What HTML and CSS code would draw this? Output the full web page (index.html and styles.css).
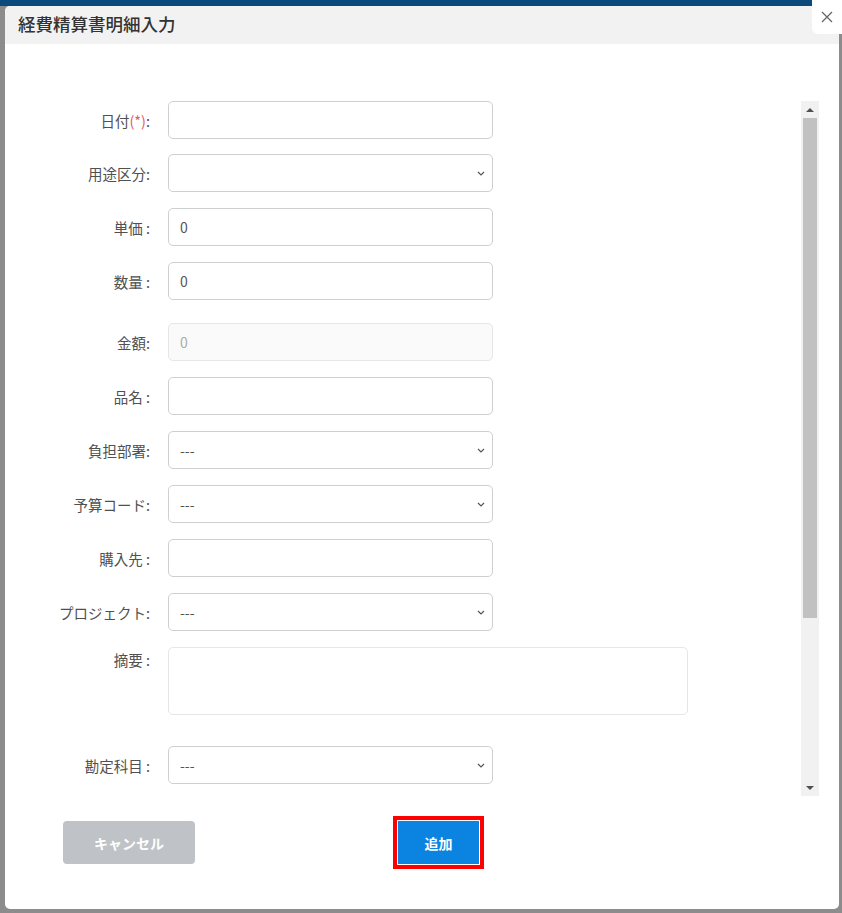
FILE: index.html
```html
<!DOCTYPE html>
<html lang="ja">
  <head>
    <meta charset="UTF-8">
    <meta name="viewport" content="width=device-width, initial-scale=1.0">
    <title>経費精算書明細入力</title>
    <link rel="stylesheet" href="styles.css">
  </head>
  <body>
    <div class="topbar"></div>

    <div class="modal">
      <div class="modal-header">
        <h2 class="modal-title">経費精算書明細入力</h2>
      </div>

      <div class="modal-body">
        <div class="scroll-area">
          <form class="detail-form">
            <div class="form-row row-first">
              <label class="form-label">日付<span class="required">(*)</span>:</label>
              <input type="text" class="form-control">
            </div>
            <div class="form-row">
              <label class="form-label">用途区分:</label>
              <div class="select-wrap">
                <select class="form-control"><option></option></select>
                <svg class="chevron" width="8" height="5" viewBox="0 0 8 5"><path d="M1 1 L4 4 L7 1" stroke="#555" stroke-width="1.2" fill="none"/></svg>
              </div>
            </div>
            <div class="form-row">
              <label class="form-label">単価 :</label>
              <input type="text" class="form-control" value="0">
            </div>
            <div class="form-row">
              <label class="form-label">数量 :</label>
              <input type="text" class="form-control" value="0">
            </div>
            <div class="form-row row-spaced">
              <label class="form-label">金額:</label>
              <input type="text" class="form-control" value="0" disabled>
            </div>
            <div class="form-row">
              <label class="form-label">品名 :</label>
              <input type="text" class="form-control">
            </div>
            <div class="form-row">
              <label class="form-label">負担部署:</label>
              <div class="select-wrap">
                <select class="form-control"><option>---</option></select>
                <svg class="chevron" width="8" height="5" viewBox="0 0 8 5"><path d="M1 1 L4 4 L7 1" stroke="#555" stroke-width="1.2" fill="none"/></svg>
              </div>
            </div>
            <div class="form-row">
              <label class="form-label">予算コード:</label>
              <div class="select-wrap">
                <select class="form-control"><option>---</option></select>
                <svg class="chevron" width="8" height="5" viewBox="0 0 8 5"><path d="M1 1 L4 4 L7 1" stroke="#555" stroke-width="1.2" fill="none"/></svg>
              </div>
            </div>
            <div class="form-row">
              <label class="form-label">購入先 :</label>
              <input type="text" class="form-control">
            </div>
            <div class="form-row">
              <label class="form-label">プロジェクト:</label>
              <div class="select-wrap">
                <select class="form-control"><option>---</option></select>
                <svg class="chevron" width="8" height="5" viewBox="0 0 8 5"><path d="M1 1 L4 4 L7 1" stroke="#555" stroke-width="1.2" fill="none"/></svg>
              </div>
            </div>
            <div class="form-row row-top">
              <label class="form-label">摘要 :</label>
              <textarea class="form-control memo"></textarea>
            </div>
            <div class="form-row row-after-memo">
              <label class="form-label">勘定科目 :</label>
              <div class="select-wrap">
                <select class="form-control"><option>---</option></select>
                <svg class="chevron" width="8" height="5" viewBox="0 0 8 5"><path d="M1 1 L4 4 L7 1" stroke="#555" stroke-width="1.2" fill="none"/></svg>
              </div>
            </div>
          </form>

          <!-- fake scrollbar -->
          <div class="scrollbar">
            <div class="scroll-btn"><span class="arrow-up"></span></div>
            <div class="scroll-track">
              <div class="scroll-thumb"></div>
            </div>
            <div class="scroll-btn"><span class="arrow-down"></span></div>
          </div>
        </div>

        <div class="modal-footer">
          <button type="button" class="btn btn-cancel">キャンセル</button>
          <button type="button" class="btn btn-add">追加</button>
        </div>
      </div>
    </div>

    <button type="button" class="close-btn" aria-label="close">
      <svg width="12" height="12" viewBox="0 0 12 12">
        <path d="M1 1 L11 11 M11 1 L1 11" stroke="#666" stroke-width="1.3" fill="none"/>
      </svg>
    </button>
  </body>
</html>
```

FILE: styles.css
```css
:root {
  --overlay-bg: #8c8c8c;
  --topbar-bg: #0b4a7a;
  --header-bg: #f2f2f2;
  --label-color: #555;
  --title-color: #333;
  --border-color: #cfcfcf;
  --primary-color: #0a84e0;
  --cancel-bg: #bfc3c7;
  --radius: 5px;
}

* {
  margin: 0;
  padding: 0;
  box-sizing: border-box;
}

body {
  position: relative;
  height: 913px;
  overflow: hidden;
  background-color: var(--overlay-bg);
  font-family: "Noto Sans CJK JP", "Noto Sans", sans-serif;
  font-size: 14px;
  color: var(--label-color);
}

.topbar {
  height: 6px;
  background-color: var(--topbar-bg);
}

.modal {
  width: 834px;
  height: 903px;
  margin-left: 5px;
  background-color: #fff;
  border-radius: 5px;
  display: flex;
  flex-direction: column;
}

.modal-header {
  height: 38px;
  padding-left: 13px;
  padding-bottom: 3px;
  display: flex;
  align-items: center;
  background-color: var(--header-bg);
  border-radius: 5px 5px 0 0;
}

.modal-title {
  font-size: 17.5px;
  font-weight: 500;
  color: var(--title-color);
}

.modal-body {
  padding-top: 56px;
}

.scroll-area {
  height: 696px;
  display: flex;
  overflow: hidden;
}

.detail-form {
  flex: 1;
  padding-top: 1px;
}

.form-row {
  display: flex;
  align-items: center;
  gap: 18px;
  margin-bottom: 16px;
}

.row-first {
  margin-bottom: 15px;
}

.row-spaced {
  margin-top: 23px;
}

.row-top {
  align-items: flex-start;
}

.row-top .form-label {
  padding-top: 2px;
}

.row-after-memo {
  margin-top: 31px;
}

.form-label {
  width: 145px;
  text-align: right;
  font-size: 14.5px;
  color: #505050;
}

.required {
  color: #e45b5b;
}

.form-control {
  width: 325px;
  height: 38px;
  padding: 0 8px 0 11px;
  border: 1px solid var(--border-color);
  border-radius: var(--radius);
  background-color: #fff;
  font-family: inherit;
  font-size: 14px;
  color: var(--label-color);
  outline: none;
}

.select-wrap {
  position: relative;
  display: flex;
}

select.form-control {
  appearance: none;
  padding-left: 11px;
}

.chevron {
  position: absolute;
  right: 8px;
  top: 17px;
  pointer-events: none;
}

.form-control:disabled {
  background-color: #fafafa;
  border-color: #e6e6e6;
  color: #aaa;
}

.memo {
  width: 520px;
  height: 68px;
  border-color: #e6e6e6;
  resize: none;
}

.scrollbar {
  width: 18px;
  margin-right: 20px;
  margin-top: 1px;
  background-color: #f1f1f1;
  display: flex;
  flex-direction: column;
}

.scroll-btn {
  height: 17px;
  display: flex;
  align-items: center;
  justify-content: center;
}

.scroll-track {
  flex: 1;
  padding: 0 2px;
}

.scroll-thumb {
  height: 500px;
  background-color: #c1c1c1;
}

.arrow-up,
.arrow-down {
  width: 0;
  height: 0;
  border-left: 4px solid transparent;
  border-right: 4px solid transparent;
}

.arrow-up {
  border-bottom: 4px solid #505050;
}

.arrow-down {
  border-top: 4px solid #505050;
}

.modal-footer {
  padding: 25px 0 0 58px;
  display: flex;
  align-items: center;
  gap: 203px;
}

.btn {
  height: 43px;
  border: none;
  border-radius: 4px;
  color: #fff;
  font-family: inherit;
  font-size: 14px;
  font-weight: 700;
  cursor: pointer;
}

.btn-cancel {
  width: 132px;
  background-color: var(--cancel-bg);
}

.btn-add {
  width: 81px;
  border-radius: 0;
  background-color: var(--primary-color);
  box-shadow: 0 0 0 1px #fff, 0 0 0 5px #f00;
}

.close-btn {
  position: absolute;
  top: 0;
  right: 0;
  width: 30px;
  height: 34px;
  border: none;
  border-radius: 0 0 0 6px;
  background-color: #fff;
  display: flex;
  align-items: center;
  justify-content: center;
  cursor: pointer;
}
```
